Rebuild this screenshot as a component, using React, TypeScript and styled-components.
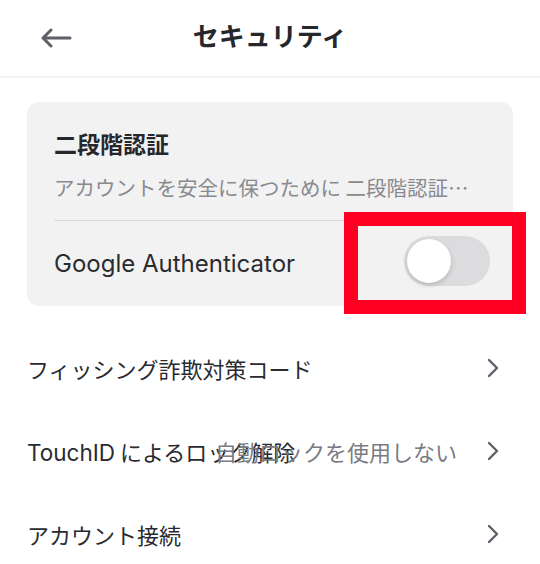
import React from "react";
import styled, { createGlobalStyle } from "styled-components";

const GlobalStyle = createGlobalStyle`
  html, body {
    margin: 0;
    padding: 0;
    background: #fff;
  }
  body {
    font-family: Inter, "Noto Sans CJK JP", sans-serif;
    color: #2a2b30;
  }
`;

const Screen = styled.div`
  width: 540px;
  height: 564px;
  overflow: hidden;
  background: #fff;
`;

const Header = styled.header`
  height: 76px;
  display: grid;
  grid-template-columns: 1fr auto 1fr;
  align-items: center;
  border-bottom: 2px solid #f3f3f3;
`;

const BackButton = styled.button`
  justify-self: start;
  margin-left: 40px;
  padding: 0;
  border: 0;
  background: none;
  display: flex;
  color: #5d5f69;
`;

const Title = styled.h1`
  margin: 0 0 3px;
  font-size: 26px;
  line-height: 34px;
  font-weight: 700;
  color: #26272c;
`;

const Body = styled.main`
  padding: 24px 27px 0;
`;

const Card = styled.section`
  position: relative;
  background: #f2f2f2;
  border-radius: 12px;
  padding: 28px 23px 0 27px;
  height: 204px;
  box-sizing: border-box;
`;

const CardTitle = styled.h2`
  margin: 0;
  font-size: 23px;
  font-weight: 700;
  line-height: 30px;
  color: #26272c;
`;

const CardText = styled.p`
  margin: 12px 0 0;
  font-family: "Noto Sans CJK JP", sans-serif;
  font-size: 20.5px;
  line-height: 30px;
  color: #898a90;
  white-space: nowrap;
`;

const CardDivider = styled.hr`
  margin: 18px 0 0;
  border: 0;
  border-top: 1.5px solid #dadadc;
`;

const ToggleRow = styled.div`
  display: flex;
  align-items: center;
  justify-content: space-between;
  height: 82px;
  margin-top: -1px;
`;

const ToggleLabel = styled.span`
  font-size: 24px;
  padding-top: 4px;
  color: #2a2b30;
`;

const Switch = styled.div`
  width: 86px;
  height: 50px;
  border-radius: 25px;
  background: #dcdcde;
  display: flex;
  align-items: center;
  padding: 3px;
  box-sizing: border-box;
`;

const Knob = styled.div`
  width: 44px;
  height: 44px;
  border-radius: 50%;
  background: #fff;
  box-shadow: 0 2px 5px rgba(0, 0, 0, 0.18);
`;

const Highlight = styled.div`
  position: absolute;
  left: 317px;
  top: 110px;
  width: 182px;
  height: 102px;
  border: 14px solid #ff0022;
  box-sizing: border-box;
  pointer-events: none;
`;

const List = styled.ul`
  list-style: none;
  margin: 20px 0 0;
  padding: 0;
`;

const Row = styled.li`
  display: flex;
  align-items: center;
  height: 83px;
  gap: 30px;
`;

const RowLabel = styled.span`
  flex: 1;
  min-width: 0;
  width: 0;
  white-space: nowrap;
  font-size: 22px;
  color: #2a2b30;
`;

const Latin = styled.span`
  font-size: 22.5px;
  margin-right: 5px;
`;

const RowValue = styled.span`
  white-space: nowrap;
  font-size: 22px;
  color: #7a7b83;
`;

const Chevron = styled.span`
  display: flex;
  margin-right: 14px;
  color: #5d5f69;
`;

const ArrowLeft = () => (
  <svg width="32" height="20" viewBox="0 0 32 20" fill="none">
    <path
      d="M30 10H3M11 2L3 10l8 8"
      stroke="currentColor"
      strokeWidth="3"
      strokeLinecap="round"
      strokeLinejoin="round"
    />
  </svg>
);

const ChevronRight = () => (
  <svg width="12" height="20" viewBox="0 0 12 20" fill="none">
    <path
      d="M2 2l8 8-8 8"
      stroke="currentColor"
      strokeWidth="2.4"
      strokeLinecap="round"
      strokeLinejoin="round"
    />
  </svg>
);

const rows: { key: string; label: React.ReactNode; value?: string }[] = [
  { key: "phishing", label: "フィッシング詐欺対策コード" },
  {
    key: "touchid",
    label: (
      <>
        <Latin>TouchID</Latin>によるロック解除
      </>
    ),
    value: "自動ロックを使用しない",
  },
  { key: "accounts", label: "アカウント接続" },
];

export default function App() {
  return (
    <Screen>
      <GlobalStyle />
      <Header>
        <BackButton aria-label="戻る">
          <ArrowLeft />
        </BackButton>
        <Title>セキュリティ</Title>
        <span />
      </Header>
      <Body>
        <Card>
          <CardTitle>二段階認証</CardTitle>
          <CardText>アカウントを安全に保つために 二段階認証…</CardText>
          <CardDivider />
          <ToggleRow>
            <ToggleLabel>Google Authenticator</ToggleLabel>
            <Switch>
              <Knob />
            </Switch>
          </ToggleRow>
          <Highlight />
        </Card>
        <List>
          {rows.map((r) => (
            <Row key={r.key}>
              <RowLabel>{r.label}</RowLabel>
              {r.value && <RowValue>{r.value}</RowValue>}
              <Chevron>
                <ChevronRight />
              </Chevron>
            </Row>
          ))}
        </List>
      </Body>
    </Screen>
  );
}
